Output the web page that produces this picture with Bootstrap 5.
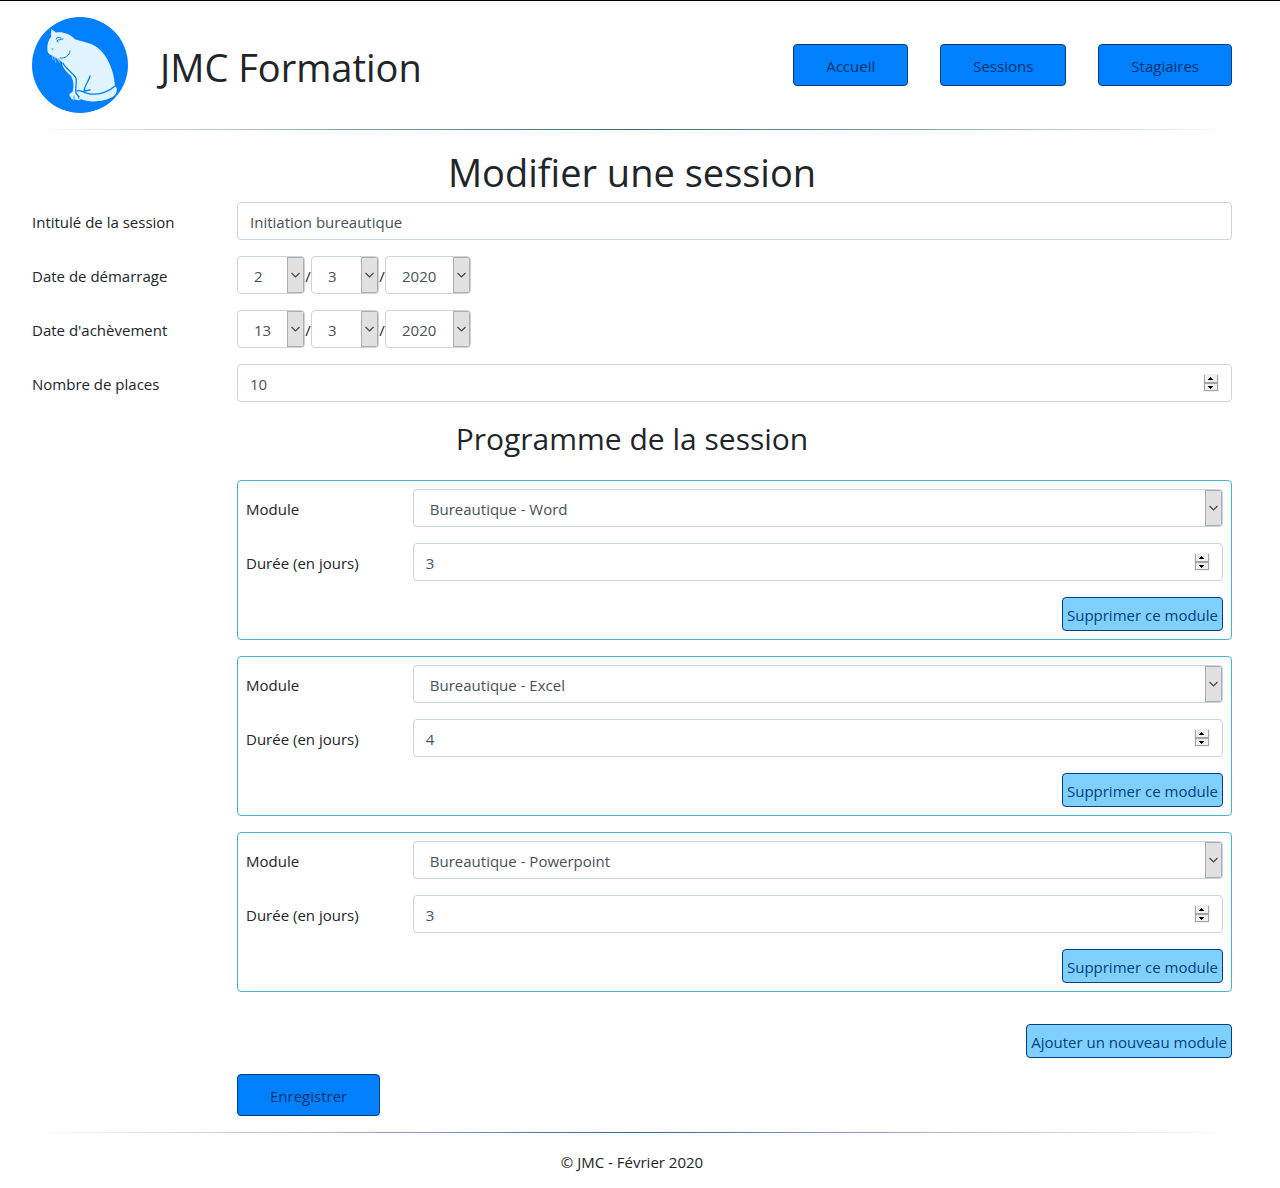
<!DOCTYPE html>
<html lang="fr">
<head>
<meta charset="utf-8">
<meta name="viewport" content="width=device-width, initial-scale=1">
<title>JMC Formation - Modifier une session</title>
<link href="https://cdn.jsdelivr.net/npm/bootstrap@5.3.0/dist/css/bootstrap.min.css" rel="stylesheet">
<style>
  body { font-family: "Open Sans", "Noto Sans", sans-serif; font-size: 15px; line-height: 24px; color: #212529; background: #fff; border-top: 1px solid #000; }
  .page { padding: 16px 48px 12px 32px; }
  .brand-name { font-size: 38px; line-height: 48px; margin: 4px 0 0 32px; }
  .main-nav { gap: 32px; }
  .page-title { font-size: 38px; line-height: 48px; margin: 18px 0 6px; }
  .section-title { font-size: 30px; line-height: 38px; margin: 18px 0 22px; }
  .rule { height: 1px; margin: 16px 0 0; border: 0; opacity: 1; }
  .rule-top { background: linear-gradient(to right, #fff0, #86a8b0 25%, #3f6878 50%, #86a8b0 75%, #fff0); }
  .rule-bottom { background: linear-gradient(to right, #fff0, #a5b5d0 25%, #3f6088 50%, #a5b5d0 75%, #fff0); }
  .field-row { --bs-gutter-x: 30px; margin-bottom: 16px; }
  .module-box .field-row { --bs-gutter-x: 24px; }
  .field-row .col-form-label { line-height: 24px; padding-top: 8px; padding-bottom: 6px; }
  .form-control, .pick { font-size: 15px; line-height: 24px; height: 38px; color: #495057; border: 1px solid #ced4da; border-radius: 4px; }
  .form-control { padding: 7px 12px 5px; }
  .pick { appearance: none; padding: 7px 17px 5px 16px; background: #fff url("data:image/svg+xml,%3Csvg xmlns='http://www.w3.org/2000/svg' width='17' height='36'%3E%3Crect x='.5' y='.5' width='16' height='35' fill='%23e1e1e1' stroke='%23adadad'/%3E%3Cpath d='M4.500 16l4 4 4-4' fill='none' stroke='%23404040' stroke-width='1.1'/%3E%3C/svg%3E") no-repeat right center; }
  .pick-short { width: 68px; }
  .pick-year { width: 86px; }
  .date-sep { width: 6px; padding-top: 2px; text-align: center; }
  input[type=number] { appearance: textfield; background: #fff url("data:image/svg+xml,%3Csvg xmlns='http://www.w3.org/2000/svg' width='16' height='18'%3E%3Crect width='16' height='18' fill='%23f0f0f0'/%3E%3Cpath d='M1.5 1v16M14.5 1v16M1 16.500h14' stroke='%23a5a5a5' fill='none'/%3E%3Cpath d='M1 9h14' stroke='%23a5a5a5' stroke-width='2'/%3E%3Cpath d='M5 6h5v-1h-1v-1h-1v-1h-1v1h-1v1h-1zM5 12h5v1h-1v1h-1v1h-1v-1h-1v-1h-1z'/%3E%3C/svg%3E") no-repeat right 12px top 9px; }
  input[type=number]::-webkit-inner-spin-button { appearance: none; }
  .btn { font-size: 15px; line-height: 24px; border-radius: 4px; }
  .btn-main { --bs-btn-color: #00336b; --bs-btn-bg: #0080ff; --bs-btn-border-color: #004080; --bs-btn-hover-bg: #0070e0; padding: 9px 32px 7px; }
  .btn-soft { --bs-btn-color: #004080; --bs-btn-bg: #80d0ff; --bs-btn-border-color: #004080; --bs-btn-hover-bg: #60c0ff; padding: 5px 4px 3px; }
  .module-box { border: 1px solid #40b8c8; border-radius: 4px; padding: 8px; margin-bottom: 16px; }
  .add-line { margin: 32px 0 16px; }
  .page-footer { padding-top: 17px; }
</style>
<script src="https://cdn.jsdelivr.net/npm/bootstrap@5.3.0/dist/js/bootstrap.bundle.min.js"></script>
</head>
<body>
<div class="page">
  <header class="d-flex align-items-center">
    <svg width="96" height="96" viewBox="0 0 96 96" role="img" aria-label="Logo JMC">
      <circle cx="48" cy="48" r="48" fill="#0080ff"/>
      <path fill="#dff4ff" d="M19.300 12 L24 15.500 C30 14.500 37 16 43 22.300 C49 24.500 58 25 66 31 C76 39 82 54 83 69 C86 70 85 77 82 79 C74 85 56 86 49 82 C48 84 45 83 43 82.500 C41 83 39 82 38.500 80 C36 78 38 76 40.500 75 C42 70 42 64 39 59 C35 55 30 51 30 45 C28 43 26 42 24 41 L19 38 C17 37 15 35.500 15.500 33 C15 29 16 23 19 20 Z"/>
      <g fill="none" stroke="#0080ff" stroke-linecap="round">
        <path stroke-width="1" d="M38 34c0 4-5 8-10 7"/>
        <path stroke-width="1" d="M24 22c1-2 3-2 5-1M25 24c2-2 4-1 6-2M25 23l1 2M20 32h1"/>
        <path stroke-width="1.300" d="M31 46c2 5 9 9 13 15 1 5-1 10 0 15l3 4"/>
        <path stroke-width="1.300" d="M58 59c-1 5-5 8-6 15M52 74l6-1M45 74c3-2 6 2 13 3 9 1 19-2 25-8"/>
        <path stroke-width=".8" d="M42 82v-3M47 82l-1-3"/>
      </g>
      <path d="M20 38l1 5M22 39l2 7M24 40l4 6M26 41l2 4" stroke="#8fcaff" stroke-width=".8" fill="none"/>
    </svg>
    <h1 class="brand-name">JMC Formation</h1>
    <nav class="main-nav d-flex ms-auto">
      <a class="btn btn-main" href="#">Accueil</a>
      <a class="btn btn-main" href="#">Sessions</a>
      <a class="btn btn-main" href="#">Stagiaires</a>
    </nav>
  </header>
  <hr class="rule rule-top">

  <main>
    <h2 class="page-title text-center">Modifier une session</h2>
    <form>
      <div class="row field-row">
        <label class="col-2 col-form-label" for="title">Intitulé de la session</label>
        <div class="col-10"><input class="form-control" type="text" id="title" value="Initiation bureautique"></div>
      </div>
      <div class="row field-row">
        <label class="col-2 col-form-label" for="start-day">Date de démarrage</label>
        <div class="col-10 d-flex align-items-center">
          <select class="pick pick-short" id="start-day"><option>2</option></select>
          <span class="date-sep">/</span>
          <select class="pick pick-short" aria-label="Mois de démarrage"><option>3</option></select>
          <span class="date-sep">/</span>
          <select class="pick pick-year" aria-label="Année de démarrage"><option>2020</option></select>
        </div>
      </div>
      <div class="row field-row">
        <label class="col-2 col-form-label" for="end-day">Date d'achèvement</label>
        <div class="col-10 d-flex align-items-center">
          <select class="pick pick-short" id="end-day"><option>13</option></select>
          <span class="date-sep">/</span>
          <select class="pick pick-short" aria-label="Mois d'achèvement"><option>3</option></select>
          <span class="date-sep">/</span>
          <select class="pick pick-year" aria-label="Année d'achèvement"><option>2020</option></select>
        </div>
      </div>
      <div class="row field-row">
        <label class="col-2 col-form-label" for="places">Nombre de places</label>
        <div class="col-10"><input class="form-control" type="number" id="places" value="10"></div>
      </div>

      <h2 class="section-title text-center">Programme de la session</h2>

      <div class="row field-row">
        <div class="col-10 offset-2">
          <div class="module-box">
            <div class="row field-row">
              <label class="col-2 col-form-label" for="module-1">Module</label>
              <div class="col-10"><select class="pick w-100" id="module-1"><option>Bureautique - Word</option></select></div>
            </div>
            <div class="row field-row">
              <label class="col-2 col-form-label" for="days-1">Durée (en jours)</label>
              <div class="col-10"><input class="form-control" type="number" id="days-1" value="3"></div>
            </div>
            <div class="d-flex justify-content-end"><button class="btn btn-soft" type="button">Supprimer ce module</button></div>
          </div>
          <div class="module-box">
            <div class="row field-row">
              <label class="col-2 col-form-label" for="module-2">Module</label>
              <div class="col-10"><select class="pick w-100" id="module-2"><option>Bureautique - Excel</option></select></div>
            </div>
            <div class="row field-row">
              <label class="col-2 col-form-label" for="days-2">Durée (en jours)</label>
              <div class="col-10"><input class="form-control" type="number" id="days-2" value="4"></div>
            </div>
            <div class="d-flex justify-content-end"><button class="btn btn-soft" type="button">Supprimer ce module</button></div>
          </div>
          <div class="module-box">
            <div class="row field-row">
              <label class="col-2 col-form-label" for="module-3">Module</label>
              <div class="col-10"><select class="pick w-100" id="module-3"><option>Bureautique - Powerpoint</option></select></div>
            </div>
            <div class="row field-row">
              <label class="col-2 col-form-label" for="days-3">Durée (en jours)</label>
              <div class="col-10"><input class="form-control" type="number" id="days-3" value="3"></div>
            </div>
            <div class="d-flex justify-content-end"><button class="btn btn-soft" type="button">Supprimer ce module</button></div>
          </div>
          <div class="add-line d-flex justify-content-end"><button class="btn btn-soft" type="button">Ajouter un nouveau module</button></div>
          <button class="btn btn-main" type="submit">Enregistrer</button>
        </div>
      </div>
    </form>
  </main>

  <hr class="rule rule-bottom">
  <footer class="page-footer text-center">© JMC - Février 2020</footer>
</div>
</body>
</html>
